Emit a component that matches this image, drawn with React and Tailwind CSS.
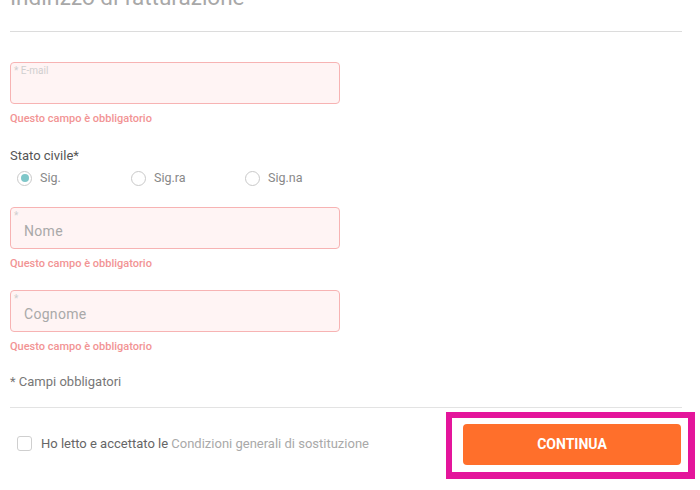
import React from "react";

function Field({ label, placeholder }) {
  return (
    <div className="relative h-[42px] w-[330px] rounded-[4px] border border-[#f7b3b3] bg-[#fff4f4]">
      <span className="absolute left-[3px] top-[2px] text-[10px] leading-[12px] text-[#cfcfcf]">{label}</span>
      {placeholder && (
        <span className="absolute left-[13px] top-[14px] text-[14px] leading-[18px] text-[#a9a9a9] tracking-[0.3px]">{placeholder}</span>
      )}
    </div>
  );
}

function Err() {
  return (
    <div className="mt-[9px] text-[11px] leading-[12px] font-medium text-[#f29494]">Questo campo è obbligatorio</div>
  );
}

function Radio({ checked, label }) {
  return (
    <div className="flex items-center">
      <span className="flex h-[15px] w-[15px] items-center justify-center rounded-full border border-[#c9c9c9] bg-white">
        {checked && <span className="h-[8px] w-[8px] rounded-full bg-[#7fc7c9]" />}
      </span>
      <span className="ml-[8px] text-[12.5px] text-[#888]">{label}</span>
    </div>
  );
}

export default function App() {
  return (
    <div className="h-[490px] w-[700px] overflow-hidden bg-white" style={{ fontFamily: "Roboto, 'Liberation Sans', sans-serif" }}>
      <div className="pl-[10px] pr-[18px]">
        <div className="-mt-[15px] h-[29px] text-[22.5px] leading-[24px] text-[#a8a8a8]">Indirizzo di fatturazione</div>
        <div className="mt-[17px] h-px bg-[#dcdcdc]" />
        <div className="mt-[30px]">
          <Field label="* E-mail" />
          <Err />
        </div>
        <div className="mt-[23px] text-[13px] leading-[16px] text-[#555]">Stato civile*</div>
        <div className="mt-[5px] flex pl-[7px]">
          <div className="w-[114px]"><Radio checked label="Sig." /></div>
          <div className="w-[114px]"><Radio label="Sig.ra" /></div>
          <div><Radio label="Sig.na" /></div>
        </div>
        <div className="mt-[19px]">
          <Field label="*" placeholder="Nome" />
          <Err />
        </div>
        <div className="mt-[20px]">
          <Field label="*" placeholder="Cognome" />
          <Err />
        </div>
        <div className="mt-[22px] text-[13px] leading-[14px] text-[#777]">* Campi obbligatori</div>
        <div className="mt-[18px] h-px bg-[#e3e3e3]" />
        <div className="flex items-center justify-between">
          <div className="flex items-center pl-[7px] pt-[1px]">
            <span className="h-[15px] w-[15px] rounded-[3px] border border-[#cfcfcf] bg-white" />
            <span className="ml-[9px] text-[13px] text-[#666]">
              Ho letto e accettato le <span className="text-[#a9a9a9]">Condizioni generali di sostituzione</span>
            </span>
          </div>
          <div className="-mr-[13px] mt-[4px] border-[6px] border-r-[7px] border-b-[7px] border-[#e4159b] bg-white px-[11px] pr-[7px] pt-[6px] pb-[7px]">
            <button className="flex h-[41px] w-[218px] items-center justify-center rounded-[4px] bg-[#ff6f2b] text-[14px] font-bold text-white">CONTINUA</button>
          </div>
        </div>
      </div>
    </div>
  );
}
